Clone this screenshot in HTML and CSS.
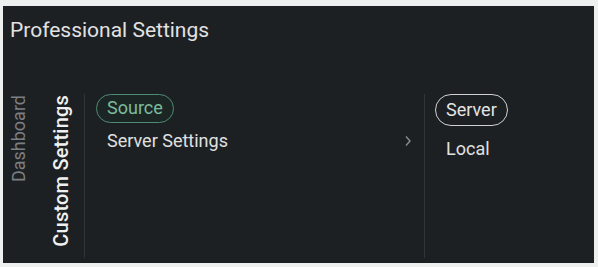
FILE: index.html
```html
<!DOCTYPE html>
<html>
<head>
<meta charset="utf-8">
<link rel="stylesheet" href="styles.css">
</head>
<body>
<div class="panel">
  <div class="title">Professional Settings</div>
  <div class="content">
    <div class="tabs">
      <div class="tab tab-dim">Dashboard</div>
      <div class="tab tab-active">Custom Settings</div>
    </div>
    <div class="col middle">
      <div class="pill pill-green">Source</div>
      <div class="row">
        <span>Server Settings</span>
        <svg class="chev" width="8" height="12" viewBox="0 0 8 12"><path d="M2 1.5 L6 6 L2 10.5" fill="none" stroke="#8a8d90" stroke-width="1.4"/></svg>
      </div>
    </div>
    <div class="col right">
      <div class="pill pill-white">Server</div>
      <div class="item">Local</div>
    </div>
  </div>
</div>
</body>
</html>
```

FILE: styles.css
```css
html, body {
  margin: 0;
  padding: 0;
  background: #eef0f0;
}
body {
  font-family: Roboto, "Liberation Sans", sans-serif;
}
.panel {
  margin: 6px 4px 0 3px;
  height: 257px;
  background: #1d2023;
  display: flex;
  flex-direction: column;
}
.title {
  color: #e2e2e2;
  font-size: 21px;
  padding: 11px 0 0 7px;
  line-height: 26px;
  height: 53px;
  box-sizing: border-box;
}
.content {
  flex: 1;
  display: flex;
  padding-top: 35px;
  padding-bottom: 5px;
}
.tabs {
  width: 82px;
  display: flex;
  align-items: flex-start;
  gap: 20px;
  padding-left: 5px;
  box-sizing: border-box;
  border-right: 1px solid #30343a;
}
.tab {
  writing-mode: vertical-rl;
  transform: rotate(180deg);
  line-height: 22px;
  margin-top: 1px;
}
.tab-dim {
  color: #7b7e82;
  font-size: 18px;
}
.tab-active {
  color: #f0f0f0;
  font-size: 20px;
  font-weight: 500;
  letter-spacing: 0.2px;
}
.col {
  display: flex;
  flex-direction: column;
  align-items: flex-start;
}
.middle {
  width: 340px;
  padding-left: 11px;
  padding-right: 10px;
  box-sizing: border-box;
  border-right: 1px solid #30343a;
}
.pill {
  height: 29px;
  line-height: 26px;
  border-radius: 15px;
  padding: 0 10px;
  font-size: 18px;
  box-sizing: border-box;
}
.pill-green {
  border: 1.5px solid #4f8a72;
  color: #7cbc9e;
  background: #1b2624;
}
.pill-white {
  height: 32px;
  line-height: 29px;
  border: 1.5px solid #cfd0d0;
  color: #e4e4e4;
  padding: 0 10px;
  border-radius: 16px;
}
.row {
  width: 100%;
  display: flex;
  justify-content: space-between;
  align-items: center;
  color: #e0e0e0;
  font-size: 18px;
  padding-left: 11px;
  padding-right: 2px;
  margin-top: 7px;
  box-sizing: border-box;
}
.chev {
  display: block;
}
.right {
  padding-left: 10px;
}
.item {
  color: #e0e0e0;
  font-size: 18px;
  padding-left: 11px;
  margin-top: 12px;
}
```
